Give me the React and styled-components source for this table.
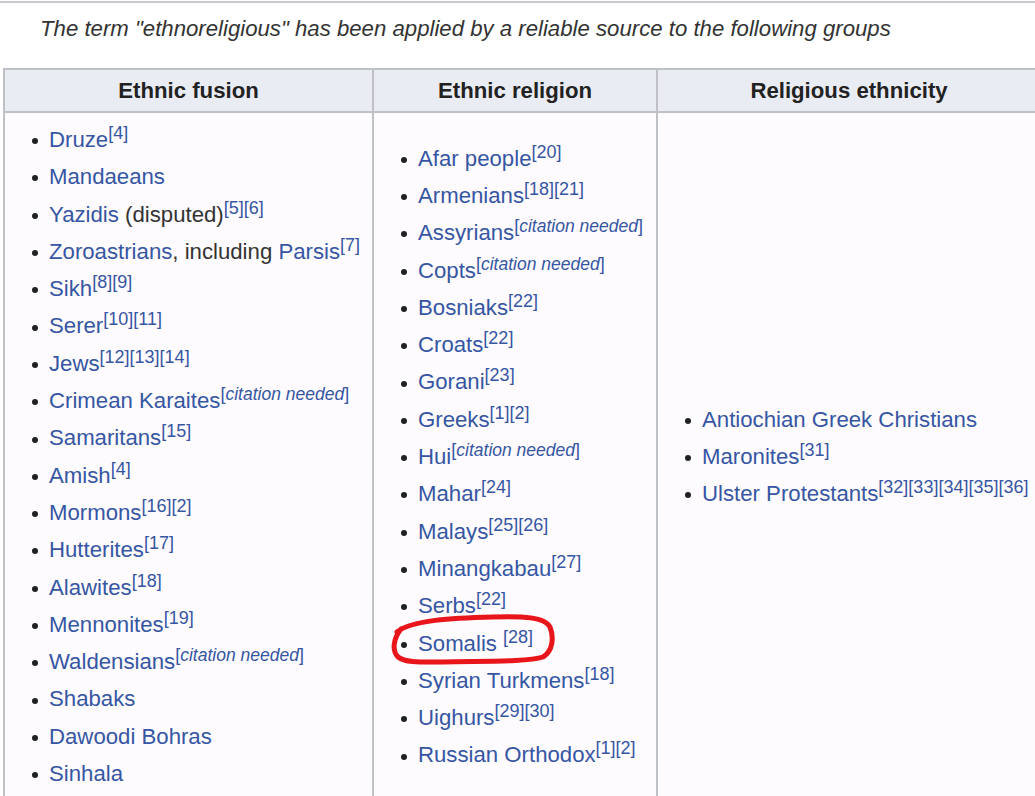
import React from "react";
import styled, { createGlobalStyle } from "styled-components";

const GlobalStyle = createGlobalStyle`
  html, body { margin: 0; padding: 0; overflow: hidden; background: #ffffff; }
  body { font-family: "Liberation Sans", Arial, sans-serif; color: #202122; }
`;

const Page = styled.div`
  width: 1035px;
  height: 796px;
  overflow: hidden;
`;

const TopRule = styled.div`
  margin-top: 1px;
  border-top: 2px solid #c9cacf;
`;

const Caption = styled.div`
  padding-left: 40px;
  height: 52px;
  line-height: 52px;
  font-size: 22.2px;
  font-style: italic;
  color: #333333;
`;

const Table = styled.table`
  margin: 13px 0 0 3px;
  width: 1037px;
  table-layout: fixed;
  border-collapse: collapse;
  border: 2px solid #bfc1c7;
  background: #fdfbfd;
`;

const Th = styled.th`
  background: #eaecf3;
  border: 2px solid #bfc1c7;
  height: 41px;
  padding: 0 6px;
  font-size: 22.2px;
  font-weight: bold;
  color: #222222;
  text-align: center;
`;

const Td = styled.td`
  border: 2px solid #bfc1c7;
  padding: 8px 6px;
  vertical-align: middle;
`;

const List = styled.ul`
  list-style: none;
  margin: 0;
  padding: 0 0 0 21px;
`;

const Item = styled.li`
  position: relative;
  font-size: 22.2px;
  line-height: 37.3px;
  height: 37.3px;
  white-space: nowrap;
  color: #333333;
`;

const Bullet = styled.span`
  display: inline-block;
  width: 6px;
  height: 6px;
  border-radius: 50%;
  background: #202122;
  margin-right: 11px;
  vertical-align: middle;
`;

const Link = styled.span`
  color: #3656a3;
`;

const Sup = styled.sup`
  font-size: 18px;
  line-height: 1;
  color: #3656a3;
`;

const CnText = styled.span`
  font-style: italic;
  font-size: 17.5px;
`;

const Highlight = styled.svg`
  position: absolute;
  left: -8px;
  top: -10px;
  overflow: visible;
  pointer-events: none;
`;

const L = (t) => ({ t, link: true });
const T = (t) => ({ t, link: false });
const CN = "cn";

const col1 = [
  { parts: [L("Druze")], sup: "[4]" },
  { parts: [L("Mandaeans")] },
  { parts: [L("Yazidis"), T(" (disputed)")], sup: "[5][6]" },
  { parts: [L("Zoroastrians"), T(", including "), L("Parsis")], sup: "[7]" },
  { parts: [L("Sikh")], sup: "[8][9]" },
  { parts: [L("Serer")], sup: "[10][11]" },
  { parts: [L("Jews")], sup: "[12][13][14]" },
  { parts: [L("Crimean Karaites")], sup: CN },
  { parts: [L("Samaritans")], sup: "[15]" },
  { parts: [L("Amish")], sup: "[4]" },
  { parts: [L("Mormons")], sup: "[16][2]" },
  { parts: [L("Hutterites")], sup: "[17]" },
  { parts: [L("Alawites")], sup: "[18]" },
  { parts: [L("Mennonites")], sup: "[19]" },
  { parts: [L("Waldensians")], sup: CN },
  { parts: [L("Shabaks")] },
  { parts: [L("Dawoodi Bohras")] },
  { parts: [L("Sinhala")] },
];

const col2 = [
  { parts: [L("Afar people")], sup: "[20]" },
  { parts: [L("Armenians")], sup: "[18][21]" },
  { parts: [L("Assyrians")], sup: CN },
  { parts: [L("Copts")], sup: CN },
  { parts: [L("Bosniaks")], sup: "[22]" },
  { parts: [L("Croats")], sup: "[22]" },
  { parts: [L("Gorani")], sup: "[23]" },
  { parts: [L("Greeks")], sup: "[1][2]" },
  { parts: [L("Hui")], sup: CN },
  { parts: [L("Mahar")], sup: "[24]" },
  { parts: [L("Malays")], sup: "[25][26]" },
  { parts: [L("Minangkabau")], sup: "[27]" },
  { parts: [L("Serbs")], sup: "[22]" },
  { parts: [L("Somalis"), T(" ")], sup: "[28]", marked: true },
  { parts: [L("Syrian Turkmens")], sup: "[18]" },
  { parts: [L("Uighurs")], sup: "[29][30]" },
  { parts: [L("Russian Orthodox")], sup: "[1][2]" },
];

const col3 = [
  { parts: [L("Antiochian Greek Christians")] },
  { parts: [L("Maronites")], sup: "[31]" },
  { parts: [L("Ulster Protestants")], sup: "[32][33][34][35][36]" },
];

function Mark() {
  return (
    <Highlight width="165" height="50" viewBox="0 0 165 50">
      <path
        d="M4 17 C 18 5, 60 3, 100 2 C 130 1, 152 2, 157 12 C 161 22, 160 36, 150 42 C 135 47, 90 46, 50 47 C 30 47, 12 48, 5 42 C -1 36, 0 24, 8 14"
        fill="none"
        stroke="#e8151b"
        strokeWidth="5"
        strokeLinecap="round"
        strokeLinejoin="round"
      />
    </Highlight>
  );
}

function Entry({ item }) {
  return (
    <Item>
      <Bullet />
      {item.parts.map((p, i) =>
        p.link ? <Link key={i}>{p.t}</Link> : <React.Fragment key={i}>{p.t}</React.Fragment>
      )}
      {item.sup === CN ? (
        <Sup>
          [<CnText>citation needed</CnText>]
        </Sup>
      ) : item.sup ? (
        <Sup>{item.sup}</Sup>
      ) : null}
      {item.marked && <Mark />}
    </Item>
  );
}

function Column({ items }) {
  return (
    <Td>
      <List>
        {items.map((it, i) => (
          <Entry key={i} item={it} />
        ))}
      </List>
    </Td>
  );
}

export default function App() {
  return (
    <Page>
      <GlobalStyle />
      <TopRule />
      <Caption>The term "ethnoreligious" has been applied by a reliable source to the following groups</Caption>
      <Table>
        <colgroup>
          <col style={{ width: 369 }} />
          <col style={{ width: 284 }} />
          <col style={{ width: 384 }} />
        </colgroup>
        <thead>
          <tr>
            <Th>Ethnic fusion</Th>
            <Th>Ethnic religion</Th>
            <Th>Religious ethnicity</Th>
          </tr>
        </thead>
        <tbody>
          <tr>
            <Column items={col1} />
            <Column items={col2} />
            <Column items={col3} />
          </tr>
        </tbody>
      </Table>
    </Page>
  );
}
